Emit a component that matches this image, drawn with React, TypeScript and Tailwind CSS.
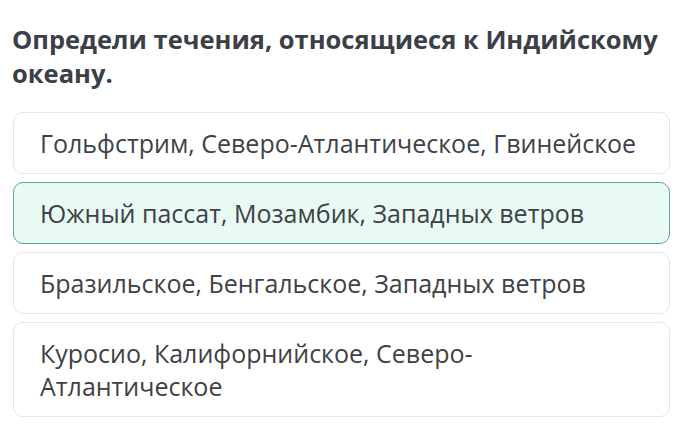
const options = [
  { text: "Гольфстрим, Северо-Атлантическое, Гвинейское", selected: false },
  { text: "Южный пассат, Мозамбик, Западных ветров", selected: true },
  { text: "Бразильское, Бенгальское, Западных ветров", selected: false },
  { text: "Куросио, Калифорнийское, Северо-Атлантическое", selected: false },
];

export default function App() {
  return (
    <div
      className="w-[683px] h-[441px] bg-white overflow-hidden pt-[22px] pl-[12px] pr-[13px]"
      style={{ fontFamily: '"Open Sans", "Noto Sans", sans-serif' }}
    >
      <h1 className="text-[25.5px] leading-[34px] font-bold text-[#3b4046]">
        Определи течения, относящиеся к Индийскому океану.
      </h1>
      <div className="mt-[22px] flex flex-col gap-[8px] pl-[1px]">
        {options.map((o) => (
          <div
            key={o.text}
            className={
              o.selected
                ? "rounded-[10px] border border-[#5aa898] bg-[#e9faf4] px-[26px] py-[13.5px] text-[25px] leading-[33px] text-[#3d4247]"
                : "rounded-[10px] border border-[#e4e6e8] bg-white px-[26px] py-[13.5px] text-[25px] leading-[33px] text-[#3d4247]"
            }
          >
            {o.text}
          </div>
        ))}
      </div>
    </div>
  );
}
